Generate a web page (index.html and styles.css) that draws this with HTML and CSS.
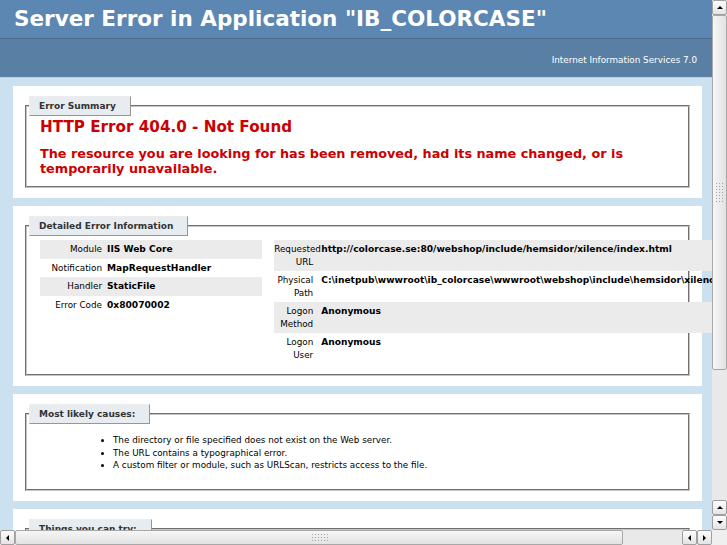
FILE: index.html
```html
<!DOCTYPE html>
<html lang="en">
<head>
    <meta charset="UTF-8">
    <title>IIS 7.0 Detailed Error - 404.0 - Not Found</title>
    <link rel="stylesheet" href="styles.css">
</head>
<body>
<div class="window">
    <div class="page">
        <div class="header"><h1>Server Error in Application "IB_COLORCASE"</h1></div>
        <div class="server-version">Internet Information Services 7.0</div>
        <div class="content">
            <div class="content-container">
                <div class="fieldset">
                    <div class="legend">Error Summary</div>
                    <h2>HTTP Error 404.0 - Not Found</h2>
                    <h3>The resource you are looking for has been removed, had its name changed, or is temporarily unavailable.</h3>
                </div>
            </div>
            <div class="content-container">
                <div class="fieldset details">
                    <div class="legend">Detailed Error Information</div>
                    <div class="details-row">
                        <div class="details-left">
                            <table>
                                <tr class="alt"><th>Module</th><td>IIS Web Core</td></tr>
                                <tr><th>Notification</th><td>MapRequestHandler</td></tr>
                                <tr class="alt"><th>Handler</th><td>StaticFile</td></tr>
                                <tr><th>Error Code</th><td>0x80070002</td></tr>
                            </table>
                        </div>
                        <div class="details-right">
                            <table>
                                <tr class="alt"><th>Requested URL</th><td>http://colorcase.se:80/webshop/include/hemsidor/xilence/index.html</td></tr>
                                <tr><th>Physical Path</th><td>C:\inetpub\wwwroot\ib_colorcase\wwwroot\webshop\include\hemsidor\xilence\index.html</td></tr>
                                <tr class="alt"><th>Logon Method</th><td>Anonymous</td></tr>
                                <tr><th>Logon User</th><td>Anonymous</td></tr>
                            </table>
                        </div>
                    </div>
                </div>
            </div>
            <div class="content-container">
                <div class="fieldset">
                    <div class="legend">Most likely causes:</div>
                    <ul>
                        <li>The directory or file specified does not exist on the Web server.</li>
                        <li>The URL contains a typographical error.</li>
                        <li>A custom filter or module, such as URLScan, restricts access to the file.</li>
                    </ul>
                </div>
            </div>
            <div class="content-container">
                <div class="fieldset">
                    <div class="legend">Things you can try:</div>
                    <ul>
                        <li>Create the content on the Web server.</li>
                        <li>Review the browser URL.</li>
                        <li>Create a tracing rule to track failed requests for this HTTP status code and see which module is calling SetStatus.</li>
                    </ul>
                </div>
            </div>
        </div>
    </div>

    <div class="vscroll">
        <div class="sb-btn"><span class="arrow-up"></span></div>
        <div class="sb-thumb vthumb"><span class="grip vgrip"></span></div>
        <div class="sb-track"></div>
        <div class="sb-btn"><span class="arrow-up"></span></div>
        <div class="sb-btn"><span class="arrow-down"></span></div>
    </div>
    <div class="hscroll">
        <div class="sb-btn"><span class="arrow-left"></span></div>
        <div class="sb-thumb hthumb"><span class="grip hgrip"></span></div>
        <div class="sb-track"></div>
        <div class="sb-btn"><span class="arrow-left"></span></div>
        <div class="sb-btn"><span class="arrow-right"></span></div>
    </div>
    <div class="corner"></div>
</div>
</body>
</html>
```

FILE: styles.css
```css
body {
    margin: 0;
    overflow: hidden;
    font-family: "DejaVu Sans", Verdana, sans-serif;
    font-size: 8.8px;
    line-height: 12.5px;
    color: #000;
    background-color: #efefef;
}
.window {
    display: grid;
    grid-template-columns: 712px 15px;
    grid-template-rows: 530px 15px;
    width: 727px;
    height: 545px;
}
.page {
    overflow: hidden;
    background-color: #cbe1ef;
}
.header {
    padding: 6px 14px;
    background-color: #5c87b2;
}
.header h1 {
    margin: 0;
    font-size: 21.5px;
    line-height: 26px;
    color: #fff;
    white-space: nowrap;
}
.server-version {
    padding: 16px 15px 11px 14px;
    line-height: 11px;
    text-align: right;
    color: #fff;
    background-color: #5a7fa5;
    border-top: 1px solid #4a6c8e;
    border-bottom: 1px solid #c1cfdd;
}
.content {
    width: 689px;
    margin-left: 13px;
}
.content-container {
    margin-top: 8px;
    padding: 10px;
    background-color: #fff;
}
.fieldset {
    margin: 9px 2px 0;
    padding: 0 15px 10px 13px;
    border: 2px groove #c4c4c4;
}
.legend {
    width: fit-content;
    margin: -11px 0 2px -11px;
    padding: 4px 14px 4px 9px;
    line-height: 10px;
    font-size: 9px;
    font-weight: bold;
    color: #333;
    background-color: #e7ecf0;
    border-top: 1px solid #ededed;
    border-left: 1px solid #ededed;
    border-right: 1px solid #969696;
    border-bottom: 1px solid #969696;
}
h2 {
    margin: 0;
    font-size: 15.2px;
    line-height: 18px;
    color: #cc0000;
}
h3 {
    margin: 10px 0 0;
    font-size: 12.8px;
    line-height: 15px;
    color: #cc0000;
}
ul {
    margin: 10px 0 7px 33px;
    padding-left: 40px;
}
.details-row {
    display: flex;
    margin-top: 4px;
}
.details-left {
    width: 35%;
    margin-right: 2%;
}
.details-right {
    width: 63%;
    min-width: 0;
}
table {
    width: 100%;
    border-collapse: collapse;
    border-spacing: 0;
}
th, td {
    padding: 3px 0;
    vertical-align: top;
    text-align: left;
    font-weight: bold;
}
th {
    width: 62px;
    padding-right: 5px;
    text-align: right;
    font-weight: normal;
}
td {
    font-size: 9.1px;
}
tr.alt th, tr.alt td {
    background-color: #ebebeb;
}
.details-right table {
    width: 440px;
    table-layout: fixed;
}
.details-right th {
    width: 39px;
    padding-right: 8px;
}
.details-right td {
    white-space: nowrap;
}

/* scrollbars */
.vscroll {
    display: flex;
    flex-direction: column;
}
.hscroll {
    display: flex;
}
.sb-btn {
    display: flex;
    align-items: center;
    justify-content: center;
    box-sizing: border-box;
    flex: 0 0 15px;
    height: 15px;
    width: 15px;
    border: 1px solid #a0a0a0;
    border-radius: 2px;
    background: linear-gradient(#fdfdfd, #e4e4e4);
}
.sb-thumb {
    display: flex;
    align-items: center;
    justify-content: center;
    box-sizing: border-box;
    border: 1px solid #a8a8a8;
    border-radius: 2px;
}
.vthumb {
    flex: 0 0 355px;
    background: linear-gradient(to right, #f6f6f6, #e2e2e2);
}
.hthumb {
    flex: 0 0 608px;
    background: linear-gradient(#f6f6f6, #e2e2e2);
}
.sb-track {
    flex: 1;
    background-color: #f7f7f7;
    background-image: radial-gradient(circle, #d8d8d8 0.6px, transparent 0.8px);
    background-size: 2px 2px;
}
.grip {
    background-image: radial-gradient(circle, #a4a4a4 0.7px, transparent 0.9px);
    background-size: 3px 3px;
}
.vgrip {
    width: 10px;
    height: 22px;
}
.hgrip {
    width: 17px;
    height: 9px;
}
.corner {
    background-color: #efefef;
}
.arrow-up, .arrow-down, .arrow-left, .arrow-right {
    width: 0;
    height: 0;
}
.arrow-up {
    border-left: 3px solid transparent;
    border-right: 3px solid transparent;
    border-bottom: 3px solid #000;
}
.arrow-down {
    border-left: 3px solid transparent;
    border-right: 3px solid transparent;
    border-top: 3px solid #000;
}
.arrow-left {
    border-top: 3px solid transparent;
    border-bottom: 3px solid transparent;
    border-right: 3px solid #000;
}
.arrow-right {
    border-top: 3px solid transparent;
    border-bottom: 3px solid transparent;
    border-left: 3px solid #000;
}
```
